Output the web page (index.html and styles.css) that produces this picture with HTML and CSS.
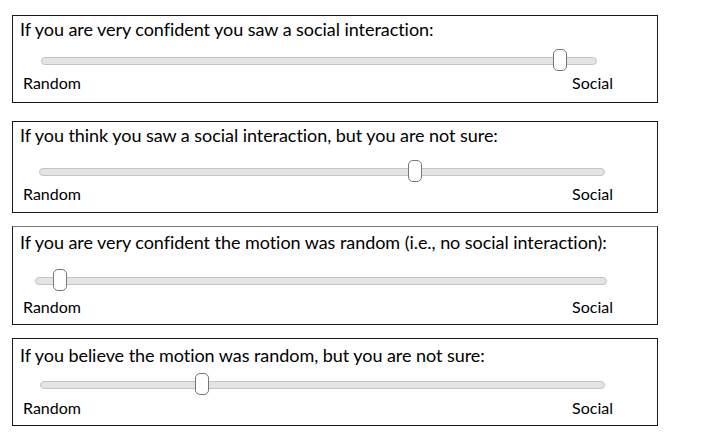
FILE: index.html
```html
<!DOCTYPE html>
<html>
<head>
<meta charset="utf-8">
<link rel="stylesheet" href="styles.css">
</head>
<body>
<div class="page">
  <section class="card card-1">
    <div class="q">If you are very confident you saw a social interaction:</div>
    <div class="slider s-1"><div class="track"><div class="thumb" style="left: 93.5%"></div></div></div>
    <div class="labels l-1"><span>Random</span><span>Social</span></div>
  </section>
  <section class="card card-2">
    <div class="q">If you think you saw a social interaction, but you are not sure:</div>
    <div class="slider s-2"><div class="track"><div class="thumb" style="left: 66.5%"></div></div></div>
    <div class="labels l-2"><span>Random</span><span>Social</span></div>
  </section>
  <section class="card card-3">
    <div class="q">If you are very confident the motion was random (i.e., no social interaction):</div>
    <div class="slider s-3"><div class="track"><div class="thumb" style="left: 4.2%"></div></div></div>
    <div class="labels l-3"><span>Random</span><span>Social</span></div>
  </section>
  <section class="card card-4">
    <div class="q">If you believe the motion was random, but you are not sure:</div>
    <div class="slider s-4"><div class="track"><div class="thumb" style="left: 28.6%"></div></div></div>
    <div class="labels l-4"><span>Random</span><span>Social</span></div>
  </section>
</div>
</body>
</html>
```
FILE: styles.css
```css
html, body {
  margin: 0;
  padding: 0;
  background: #ffffff;
}
body {
  font-family: Lato, "Open Sans", "DejaVu Sans", sans-serif;
  color: #000000;
}
.page {
  width: 720px;
  height: 436px;
  box-sizing: border-box;
  padding: 15px 0 0 12px;
  display: flex;
  flex-direction: column;
}
.card {
  width: 646px;
  box-sizing: border-box;
  border: 1px solid #1a1a1a;
  display: flex;
  flex-direction: column;
  padding-top: 3px;
}
.card-1 { height: 88px; }
.card-2 { height: 92px; margin-top: 18px; }
.card-3 { height: 99px; margin-top: 13px; border-top-color: #777; padding-top: 5px; }
.card-4 { height: 88px; margin-top: 13px; padding-top: 6px; }

.q {
  font-size: 18px;
  line-height: 20px;
  padding-left: 7px;
  letter-spacing: -0.05px;
}
.slider {
  position: relative;
  height: 21px;
}
.track {
  position: relative;
  height: 6px;
  background: #e4e4e4;
  border: 1px solid #c4c4c4;
  border-radius: 4px;
  top: 7px;
}
.thumb {
  position: absolute;
  top: -9px;
  width: 12px;
  height: 20px;
  margin-left: -7px;
  background: #ffffff;
  border: 1px solid #777777;
  border-radius: 5px;
}
.s-1 { margin: 11px 60px 0 28px; }
.s-2 { margin: 16px 52px 0 26px; }
.s-3 { margin: 18px 50px 0 22px; }
.s-4 { margin: 9px 52px 0 27px; }

.labels {
  display: flex;
  justify-content: space-between;
  font-size: 16px;
  line-height: 18px;
  padding: 0 44px 0 10px;
}
.l-1 { margin-top: 3px; }
.l-2 { margin-top: 3px; }
.l-3 { margin-top: 7px; }
.l-4 { margin-top: 4px; }
```
